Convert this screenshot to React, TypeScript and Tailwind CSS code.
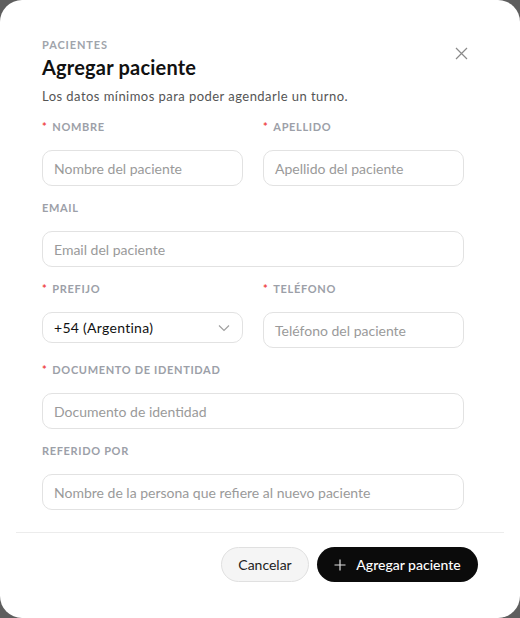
import React from "react";

const Label = ({ text, req }: { text: string; req?: boolean }) => (
  <div className="h-4 flex items-center text-[11px] font-bold tracking-[0.06em] text-[#9ca0a8] leading-4">
    {req && <span className="text-[#ef4444] mr-[5px]">*</span>}
    {text}
  </div>
);

const Input = ({ ph }: { ph: string }) => (
  <div className="mt-[15px] h-9 rounded-[10px] border border-[#e2e2e2] flex items-center px-[11px] text-[14px] text-[#9a9a9a]">
    {ph}
  </div>
);

export default function App() {
  return (
    <div className="w-[520px] h-[618px] bg-[#5e5e5e]" style={{ fontFamily: "Lato, 'Open Sans', sans-serif" }}>
      <div className="w-full h-full bg-white rounded-[22px] flex flex-col">
        <div className="pl-[42px] pr-[56px] pt-[38px] relative">
          <div className="text-[11px] font-bold tracking-[0.08em] text-[#a0a4ab] leading-[14px]">PACIENTES</div>
          <div className="mt-[3px] text-[20px] font-bold text-[#111] leading-6 tracking-[0.01em]">Agregar paciente</div>
          <div className="mt-[9px] text-[13px] text-[#555] leading-[16px] tracking-[0.035em]">Los datos mínimos para poder agendarle un turno.</div>
          <svg className="absolute right-[52px] top-[47px]" width="13" height="13" viewBox="0 0 13 13" fill="none" stroke="#8a8a8a" strokeWidth="1.2">
            <path d="M1 1 L12 12 M12 1 L1 12" />
          </svg>
          <div className="mt-[15px] flex flex-col gap-[14px]">
            <div className="grid grid-cols-2 gap-5">
              <div><Label text="NOMBRE" req /><Input ph="Nombre del paciente" /></div>
              <div><Label text="APELLIDO" req /><Input ph="Apellido del paciente" /></div>
            </div>
            <div><Label text="EMAIL" /><Input ph="Email del paciente" /></div>
            <div className="grid grid-cols-2 gap-5">
              <div>
                <Label text="PREFIJO" req />
                <div className="mt-[15px] h-[31px] rounded-[10px] border border-[#e2e2e2] flex items-center justify-between pl-[11px] pr-[12px] text-[14px] text-[#111]">
                  <span className="tracking-[0.02em]">+54 (Argentina)</span>
                  <svg width="12" height="8" viewBox="0 0 12 8" fill="none" stroke="#a0a0a0" strokeWidth="1.2">
                    <path d="M1 1.5 L6 6.5 L11 1.5" />
                  </svg>
                </div>
              </div>
              <div><Label text="TELÉFONO" req /><Input ph="Teléfono del paciente" /></div>
            </div>
            <div><Label text="DOCUMENTO DE IDENTIDAD" req /><Input ph="Documento de identidad" /></div>
            <div><Label text="REFERIDO POR" /><Input ph="Nombre de la persona que refiere al nuevo paciente" /></div>
          </div>
        </div>
        <div className="mx-4 mt-[22px] border-t border-[#ececec]" />
        <div className="flex justify-end gap-2 pr-[42px] pt-[14px]">
          <div className="h-[35px] w-[88px] rounded-full border border-[#e0e0e0] bg-[#f5f5f5] flex items-center justify-center text-[14px] text-[#222]">Cancelar</div>
          <div className="h-[35px] w-[161px] rounded-full bg-[#0b0b0b] flex items-center justify-center gap-[10px] text-[14px] font-medium text-white">
            <svg width="12" height="12" viewBox="0 0 12 12" fill="none" stroke="#ddd" strokeWidth="1.2">
              <path d="M6 0.5 V11.5 M0.5 6 H11.5" />
            </svg>
            <span>Agregar paciente</span>
          </div>
        </div>
      </div>
    </div>
  );
}
